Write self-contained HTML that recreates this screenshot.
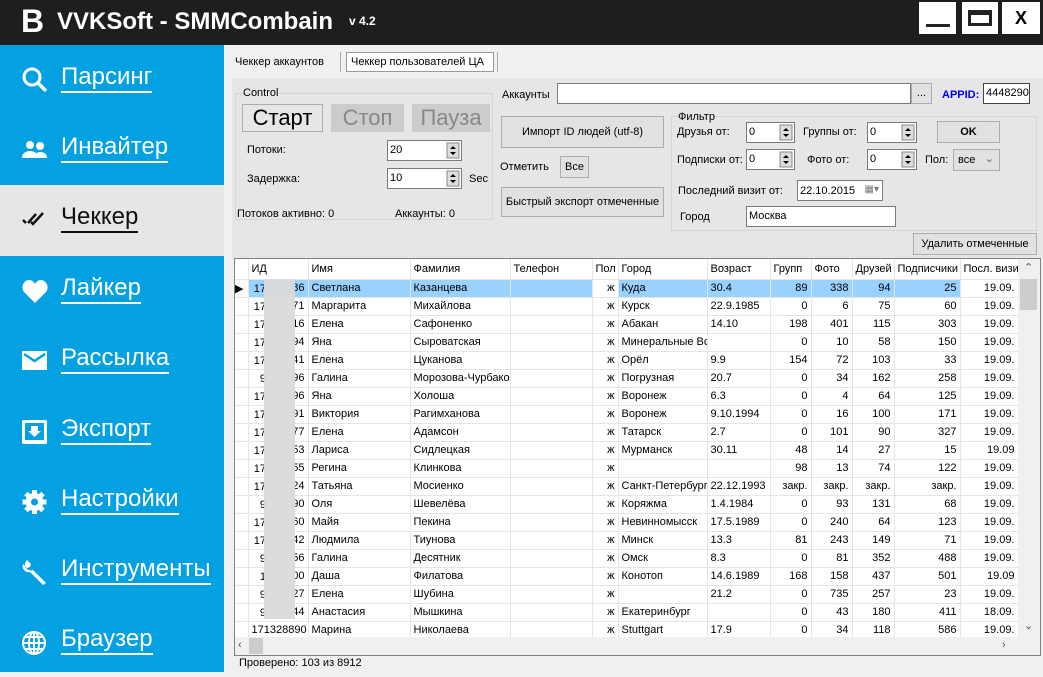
<!DOCTYPE html>
<html><head><meta charset="utf-8"><style>
*{margin:0;padding:0;box-sizing:border-box}
body{width:1043px;height:672px;overflow:hidden;background:#f0f0f0;font-family:"Liberation Sans",sans-serif;font-size:11px;color:#000;position:relative}
.a{position:absolute}
#tb{left:0;top:0;width:1043px;height:45px;background:#1e1e1e}
.wb{background:#fff;top:2px;height:32px}
#sb{left:0;top:45px;width:224px;height:627px;background:#03a0e2}
.it{position:absolute;left:0;width:224px;height:70px}
.it span{position:absolute;left:61px;top:18px;font-size:24px;color:#fff;border-bottom:2px solid #fff;line-height:28px}
.it svg{position:absolute;left:21px;top:21px}
.btn{position:absolute;background:#e1e1e1;border:1px solid #adadad;text-align:center}
.inp{position:absolute;background:#fff;border:1px solid #7a7a7a;padding-left:2px}
.spin{position:absolute;right:1px;top:1px;width:14px;height:17px}
table{border-collapse:collapse;table-layout:fixed}
td{height:18px;border-right:1px solid #e5e5e5;border-bottom:1px solid #e5e5e5;padding:0 3px;white-space:nowrap;overflow:hidden;font-size:11px}
tr.h td{height:20px;border-color:#e5e5e5}
td.r{text-align:right}
</style></head><body>
<div id="tb" class="a">
 <div class="a" style="left:21px;top:5px;font:bold 32px 'Liberation Sans';color:#fff;line-height:32px">B</div>
 <div class="a" style="left:57px;top:8px;font:bold 24px 'Liberation Sans';color:#fff">VVKSoft - SMMCombain</div>
 <div class="a" style="left:349px;top:14px;font:bold 12px 'Liberation Sans';color:#fff">v 4.2</div>
 <div class="a wb" style="left:919px;width:37px"><div class="a" style="left:7px;top:22px;width:24px;height:3px;background:#222"></div></div>
 <div class="a wb" style="left:962px;width:36px"><div class="a" style="left:6px;top:8px;width:24px;height:16px;border:3px solid #222;border-top-width:5px"></div></div>
 <div class="a wb" style="left:1002px;width:38px;font:bold 18px 'Liberation Sans';text-align:center;line-height:32px">X</div>
</div>
<div id="sb" class="a">
 <div class="it" style="top:0"><svg width="28" height="28" viewBox="0 0 28 28"><circle cx="11" cy="11" r="8" fill="none" stroke="#fff" stroke-width="3"/><path d="M17 17l8 8" stroke="#fff" stroke-width="3.5"/></svg><span>Парсинг</span></div>
 <div class="it" style="top:70px"><svg width="28" height="28" viewBox="0 0 28 28"><circle cx="9" cy="9" r="4" fill="#fff"/><circle cx="19" cy="10" r="4" fill="#fff"/><path d="M1 22c0-5 4-7 8-7s8 2 8 7zM13 22c1-4 3-6 6-6s7 1 7 6z" fill="#fff"/></svg><span>Инвайтер</span></div>
 <div class="it" style="top:140px;background:#e6e6e6;height:71px"><svg width="28" height="28" viewBox="0 0 28 28"><path d="M2 14l3 3M7 17l8-9M10 16l2 2 10-11" stroke="#111" stroke-width="2.5" fill="none"/></svg><span style="color:#111;border-color:#111">Чеккер</span></div>
 <div class="it" style="top:211px"><svg width="28" height="28" viewBox="0 0 28 28"><path d="M14 26L3 15C-1 10 3 3 8 3c3 0 5 2 6 4 1-2 3-4 6-4 5 0 9 7 5 12z" fill="#fff"/></svg><span>Лайкер</span></div>
 <div class="it" style="top:281px"><svg width="28" height="28" viewBox="0 0 28 28"><rect x="1" y="4" width="25" height="19" fill="#fff"/><path d="M3 7l10.5 7L24 7" stroke="#03a0e2" stroke-width="2.5" fill="none"/></svg><span>Рассылка</span></div>
 <div class="it" style="top:352px"><svg width="28" height="28" viewBox="0 0 28 28"><rect x="1" y="2" width="25" height="24" rx="2" fill="#fff"/><path d="M4 5h19v17H4z" fill="#03a0e2"/><path d="M10 8h7v5h3l-6.5 6L7 13h3z" fill="#fff"/></svg><span>Экспорт</span></div>
 <div class="it" style="top:422px"><svg width="28" height="28" viewBox="0 0 28 28"><circle cx="13.5" cy="14" r="9" fill="#fff"/><path d="M13.5 2v24M1.5 14h24M5 5.5l17 17M22 5.5L5 22.5" stroke="#fff" stroke-width="5"/><circle cx="13.5" cy="14" r="3.5" fill="#03a0e2"/></svg><span>Настройки</span></div>
 <div class="it" style="top:492px"><svg width="28" height="28" viewBox="0 0 28 28"><path d="M4 5a6 6 0 0 0 8 7l13 13-3 2L9 14a6 6 0 0 1-7-8l4 4 3-1 1-3-4-4z" fill="#fff"/></svg><span>Инструменты</span></div>
 <div class="it" style="top:562px"><svg width="28" height="28" viewBox="0 0 28 28"><circle cx="13" cy="15" r="11" fill="none" stroke="#fff" stroke-width="2"/><ellipse cx="13" cy="15" rx="5" ry="11" fill="none" stroke="#fff" stroke-width="2"/><path d="M2 15h22M4 9h18M4 21h18M13 4v22" stroke="#fff" stroke-width="2"/></svg><span>Браузер</span></div>
</div>
<!-- tabs -->
<div class="a" style="left:235px;top:56px">Чеккер аккаунтов</div>
<div class="a" style="left:340px;top:52px;width:1px;height:20px;background:#aaa"></div>
<div class="a" style="left:346px;top:52px;width:148px;height:20px;background:#fff;border:1px solid #999;padding:3px 0 0 4px">Чеккер пользователей ЦА</div>
<div class="a" style="left:497px;top:52px;width:1px;height:20px;background:#aaa"></div>
<div class="a" style="left:232px;top:78px;width:811px;height:180px;background:#e6e6e6"></div>
<!-- control group -->
<div class="a" style="left:235px;top:93px;width:258px;height:127px;border:1px solid #d5d5d5"></div>
<div class="a" style="left:242px;top:87px;background:#e6e6e6;padding:0 1px">Control</div>
<div class="btn" style="left:242px;top:104px;width:81px;height:28px;font-size:22px;line-height:26px;background:#e6e6e6">Старт</div>
<div class="btn" style="left:331px;top:104px;width:73px;height:28px;font-size:22px;line-height:26px;background:#ccc;border-color:#ccc;color:#888">Стоп</div>
<div class="btn" style="left:412px;top:104px;width:78px;height:28px;font-size:22px;line-height:26px;background:#ccc;border-color:#ccc;color:#888">Пауза</div>
<div class="a" style="left:247px;top:144px">Потоки:</div>
<div class="inp" style="left:387px;top:140px;width:75px;height:21px;padding-top:3px">20<svg class="spin" viewBox="0 0 14 17"><rect x="1" y="1" width="12" height="15" fill="#ddd" stroke="#888"/><path d="M4 7l3-3 3 3zM4 10l3 3 3-3z" fill="#000"/></svg></div>
<div class="a" style="left:247px;top:173px">Задержка:</div>
<div class="inp" style="left:387px;top:168px;width:75px;height:21px;padding-top:3px">10<svg class="spin" viewBox="0 0 14 17"><rect x="1" y="1" width="12" height="15" fill="#ddd" stroke="#888"/><path d="M4 7l3-3 3 3zM4 10l3 3 3-3z" fill="#000"/></svg></div>
<div class="a" style="left:469px;top:173px">Sec</div>
<div class="a" style="left:237px;top:208px">Потоков активно: 0</div>
<div class="a" style="left:395px;top:208px">Аккаунты: 0</div>
<!-- middle -->
<div class="a" style="left:502px;top:89px">Аккаунты</div>
<div class="inp" style="left:557px;top:83px;width:354px;height:21px"></div>
<div class="btn" style="left:911px;top:83px;width:21px;height:21px;line-height:18px">...</div>
<div class="a" style="left:942px;top:89px;font-weight:bold;color:#0000ee">APPID:</div>
<div class="inp" style="left:983px;top:83px;width:47px;height:21px;padding-top:3px;border-color:#444">4448290</div>
<div class="btn" style="left:501px;top:116px;width:163px;height:32px;line-height:30px">Импорт ID людей (utf-8)</div>
<div class="a" style="left:500px;top:161px">Отметить</div>
<div class="btn" style="left:560px;top:156px;width:29px;height:22px;line-height:20px">Все</div>
<div class="btn" style="left:501px;top:187px;width:163px;height:30px;line-height:28px">Быстрый экспорт отмеченные</div>
<!-- filter -->
<div class="a" style="left:671px;top:116px;width:366px;height:115px;border:1px solid #d5d5d5"></div>
<div class="a" style="left:678px;top:111px;background:#e6e6e6">Фильтр</div>
<div class="a" style="left:677px;top:126px">Друзья от:</div>
<div class="inp" style="left:746px;top:122px;width:49px;height:21px;padding-top:3px">0<svg class="spin" viewBox="0 0 14 17"><rect x="1" y="1" width="12" height="15" fill="#ddd" stroke="#888"/><path d="M4 7l3-3 3 3zM4 10l3 3 3-3z"/></svg></div>
<div class="a" style="left:803px;top:126px">Группы от:</div>
<div class="inp" style="left:867px;top:122px;width:50px;height:21px;padding-top:3px">0<svg class="spin" viewBox="0 0 14 17"><rect x="1" y="1" width="12" height="15" fill="#ddd" stroke="#888"/><path d="M4 7l3-3 3 3zM4 10l3 3 3-3z"/></svg></div>
<div class="btn" style="left:937px;top:121px;width:63px;height:22px;line-height:20px;font-weight:bold">OK</div>
<div class="a" style="left:677px;top:154px">Подписки от:</div>
<div class="inp" style="left:746px;top:149px;width:49px;height:21px;padding-top:3px">0<svg class="spin" viewBox="0 0 14 17"><rect x="1" y="1" width="12" height="15" fill="#ddd" stroke="#888"/><path d="M4 7l3-3 3 3zM4 10l3 3 3-3z"/></svg></div>
<div class="a" style="left:807px;top:154px">Фото от:</div>
<div class="inp" style="left:867px;top:149px;width:50px;height:21px;padding-top:3px">0<svg class="spin" viewBox="0 0 14 17"><rect x="1" y="1" width="12" height="15" fill="#ddd" stroke="#888"/><path d="M4 7l3-3 3 3zM4 10l3 3 3-3z"/></svg></div>
<div class="a" style="left:925px;top:154px">Пол:</div>
<div class="btn" style="left:953px;top:149px;width:47px;height:22px;text-align:left;padding:4px 0 0 4px">все<span style="position:absolute;right:5px;top:2px;color:#666">&#8964;</span></div>
<div class="a" style="left:678px;top:185px">Последний визит от:</div>
<div class="inp" style="left:797px;top:180px;width:86px;height:21px;padding-top:4px">22.10.2015<span style="position:absolute;right:3px;top:3px;color:#777;font-size:10px">▦▾</span></div>
<div class="a" style="left:680px;top:211px">Город</div>
<div class="inp" style="left:746px;top:206px;width:150px;height:21px;padding-top:3px">Москва</div>
<div class="btn" style="left:913px;top:233px;width:124px;height:22px;line-height:20px">Удалить отмеченные</div>
<!-- grid -->
<div class="a" style="left:234px;top:258px;width:807px;height:398px;background:#fff;border:1px solid #828282;overflow:hidden">
<table style="width:783px">
<colgroup><col style="width:13px"><col style="width:60px"><col style="width:102px"><col style="width:100px"><col style="width:82px"><col style="width:26px"><col style="width:89px"><col style="width:63px"><col style="width:41px"><col style="width:41px"><col style="width:42px"><col style="width:66px"><col style="width:58px"></colgroup>
<tr class="h"><td></td><td>ИД</td><td>Имя</td><td>Фамилия</td><td>Телефон</td><td>Пол</td><td>Город</td><td>Возраст</td><td>Групп</td><td>Фото</td><td>Друзей</td><td>Подписчики</td><td>Посл. визи</td></tr>
<tr style="background:#99d1ff"><td style="background:#fff;padding:0">▶</td><td class="r">86</td><td>Светлана</td><td>Казанцева</td><td></td><td class="r" style="background:#fff">ж</td><td>Куда</td><td>30.4</td><td class="r">89</td><td class="r">338</td><td class="r">94</td><td class="r">25</td><td class="r" style="background:#fff">19.09.</td></tr>
<tr><td></td><td class="r">71</td><td>Маргарита</td><td>Михайлова</td><td></td><td class="r">ж</td><td>Курск</td><td>22.9.1985</td><td class="r">0</td><td class="r">6</td><td class="r">75</td><td class="r">60</td><td class="r">19.09.</td></tr>
<tr><td></td><td class="r">16</td><td>Елена</td><td>Сафоненко</td><td></td><td class="r">ж</td><td>Абакан</td><td>14.10</td><td class="r">198</td><td class="r">401</td><td class="r">115</td><td class="r">303</td><td class="r">19.09.</td></tr>
<tr><td></td><td class="r">94</td><td>Яна</td><td>Сыроватская</td><td></td><td class="r">ж</td><td>Минеральные Воды</td><td></td><td class="r">0</td><td class="r">10</td><td class="r">58</td><td class="r">150</td><td class="r">19.09.</td></tr>
<tr><td></td><td class="r">41</td><td>Елена</td><td>Цуканова</td><td></td><td class="r">ж</td><td>Орёл</td><td>9.9</td><td class="r">154</td><td class="r">72</td><td class="r">103</td><td class="r">33</td><td class="r">19.09.</td></tr>
<tr><td></td><td class="r">96</td><td>Галина</td><td>Морозова-Чурбакова</td><td></td><td class="r">ж</td><td>Погрузная</td><td>20.7</td><td class="r">0</td><td class="r">34</td><td class="r">162</td><td class="r">258</td><td class="r">19.09.</td></tr>
<tr><td></td><td class="r">96</td><td>Яна</td><td>Холоша</td><td></td><td class="r">ж</td><td>Воронеж</td><td>6.3</td><td class="r">0</td><td class="r">4</td><td class="r">64</td><td class="r">125</td><td class="r">19.09.</td></tr>
<tr><td></td><td class="r">91</td><td>Виктория</td><td>Рагимханова</td><td></td><td class="r">ж</td><td>Воронеж</td><td>9.10.1994</td><td class="r">0</td><td class="r">16</td><td class="r">100</td><td class="r">171</td><td class="r">19.09.</td></tr>
<tr><td></td><td class="r">77</td><td>Елена</td><td>Адамсон</td><td></td><td class="r">ж</td><td>Татарск</td><td>2.7</td><td class="r">0</td><td class="r">101</td><td class="r">90</td><td class="r">327</td><td class="r">19.09.</td></tr>
<tr><td></td><td class="r">53</td><td>Лариса</td><td>Сидлецкая</td><td></td><td class="r">ж</td><td>Мурманск</td><td>30.11</td><td class="r">48</td><td class="r">14</td><td class="r">27</td><td class="r">15</td><td class="r">19.09</td></tr>
<tr><td></td><td class="r">55</td><td>Регина</td><td>Клинкова</td><td></td><td class="r">ж</td><td></td><td></td><td class="r">98</td><td class="r">13</td><td class="r">74</td><td class="r">122</td><td class="r">19.09.</td></tr>
<tr><td></td><td class="r">24</td><td>Татьяна</td><td>Мосиенко</td><td></td><td class="r">ж</td><td>Санкт-Петербург</td><td>22.12.1993</td><td class="r">закр.</td><td class="r">закр.</td><td class="r">закр.</td><td class="r">закр.</td><td class="r">19.09.</td></tr>
<tr><td></td><td class="r">90</td><td>Оля</td><td>Шевелёва</td><td></td><td class="r">ж</td><td>Коряжма</td><td>1.4.1984</td><td class="r">0</td><td class="r">93</td><td class="r">131</td><td class="r">68</td><td class="r">19.09.</td></tr>
<tr><td></td><td class="r">60</td><td>Майя</td><td>Пекина</td><td></td><td class="r">ж</td><td>Невинномысск</td><td>17.5.1989</td><td class="r">0</td><td class="r">240</td><td class="r">64</td><td class="r">123</td><td class="r">19.09.</td></tr>
<tr><td></td><td class="r">42</td><td>Людмила</td><td>Тиунова</td><td></td><td class="r">ж</td><td>Минск</td><td>13.3</td><td class="r">81</td><td class="r">243</td><td class="r">149</td><td class="r">71</td><td class="r">19.09.</td></tr>
<tr><td></td><td class="r">56</td><td>Галина</td><td>Десятник</td><td></td><td class="r">ж</td><td>Омск</td><td>8.3</td><td class="r">0</td><td class="r">81</td><td class="r">352</td><td class="r">488</td><td class="r">19.09.</td></tr>
<tr><td></td><td class="r">00</td><td>Даша</td><td>Филатова</td><td></td><td class="r">ж</td><td>Конотоп</td><td>14.6.1989</td><td class="r">168</td><td class="r">158</td><td class="r">437</td><td class="r">501</td><td class="r">19.09</td></tr>
<tr><td></td><td class="r">27</td><td>Елена</td><td>Шубина</td><td></td><td class="r">ж</td><td></td><td>21.2</td><td class="r">0</td><td class="r">735</td><td class="r">257</td><td class="r">23</td><td class="r">19.09.</td></tr>
<tr><td></td><td class="r">44</td><td>Анастасия</td><td>Мышкина</td><td></td><td class="r">ж</td><td>Екатеринбург</td><td></td><td class="r">0</td><td class="r">43</td><td class="r">180</td><td class="r">411</td><td class="r">18.09.</td></tr>
<tr><td></td><td class="r">171328890</td><td>Марина</td><td>Николаева</td><td></td><td class="r">ж</td><td>Stuttgart</td><td>17.9</td><td class="r">0</td><td class="r">34</td><td class="r">118</td><td class="r">586</td><td class="r">19.09.</td></tr>
</table>
<div class="a" style="left:17px;top:20px;width:60px;height:340px">
 <div style="position:absolute;left:0;top:0;width:14px;height:340px;font-size:11px;line-height:18px;text-align:right;padding-top:1px">17<br>17<br>17<br>17<br>17<br>9<br>17<br>17<br>17<br>17<br>17<br>17<br>9<br>17<br>17<br>9<br>1<br>9<br>9</div>
</div>
<div class="a" style="left:29px;top:20px;width:31px;height:340px;background:#dadada;opacity:.95"></div>
<div class="a" style="left:783px;top:0;width:22px;height:378px;background:#f0f0f0"><div class="a" style="left:2px;top:20px;width:17px;height:31px;background:#cdcdcd"></div><div class="a" style="left:6px;top:2px;font-size:11px;color:#555">⌃</div><div class="a" style="left:6px;top:360px;font-size:11px;color:#555">⌄</div></div>
<div class="a" style="left:0;top:378px;width:805px;height:18px;background:#f0f0f0"><div class="a" style="left:14px;top:1px;width:14px;height:16px;background:#cdcdcd"></div><div class="a" style="left:3px;top:2px;color:#555">‹</div><div class="a" style="left:767px;top:2px;color:#555">›</div></div>
</div>
<div class="a" style="left:239px;top:657px">Проверено: 103 из 8912</div>
</body></html>
